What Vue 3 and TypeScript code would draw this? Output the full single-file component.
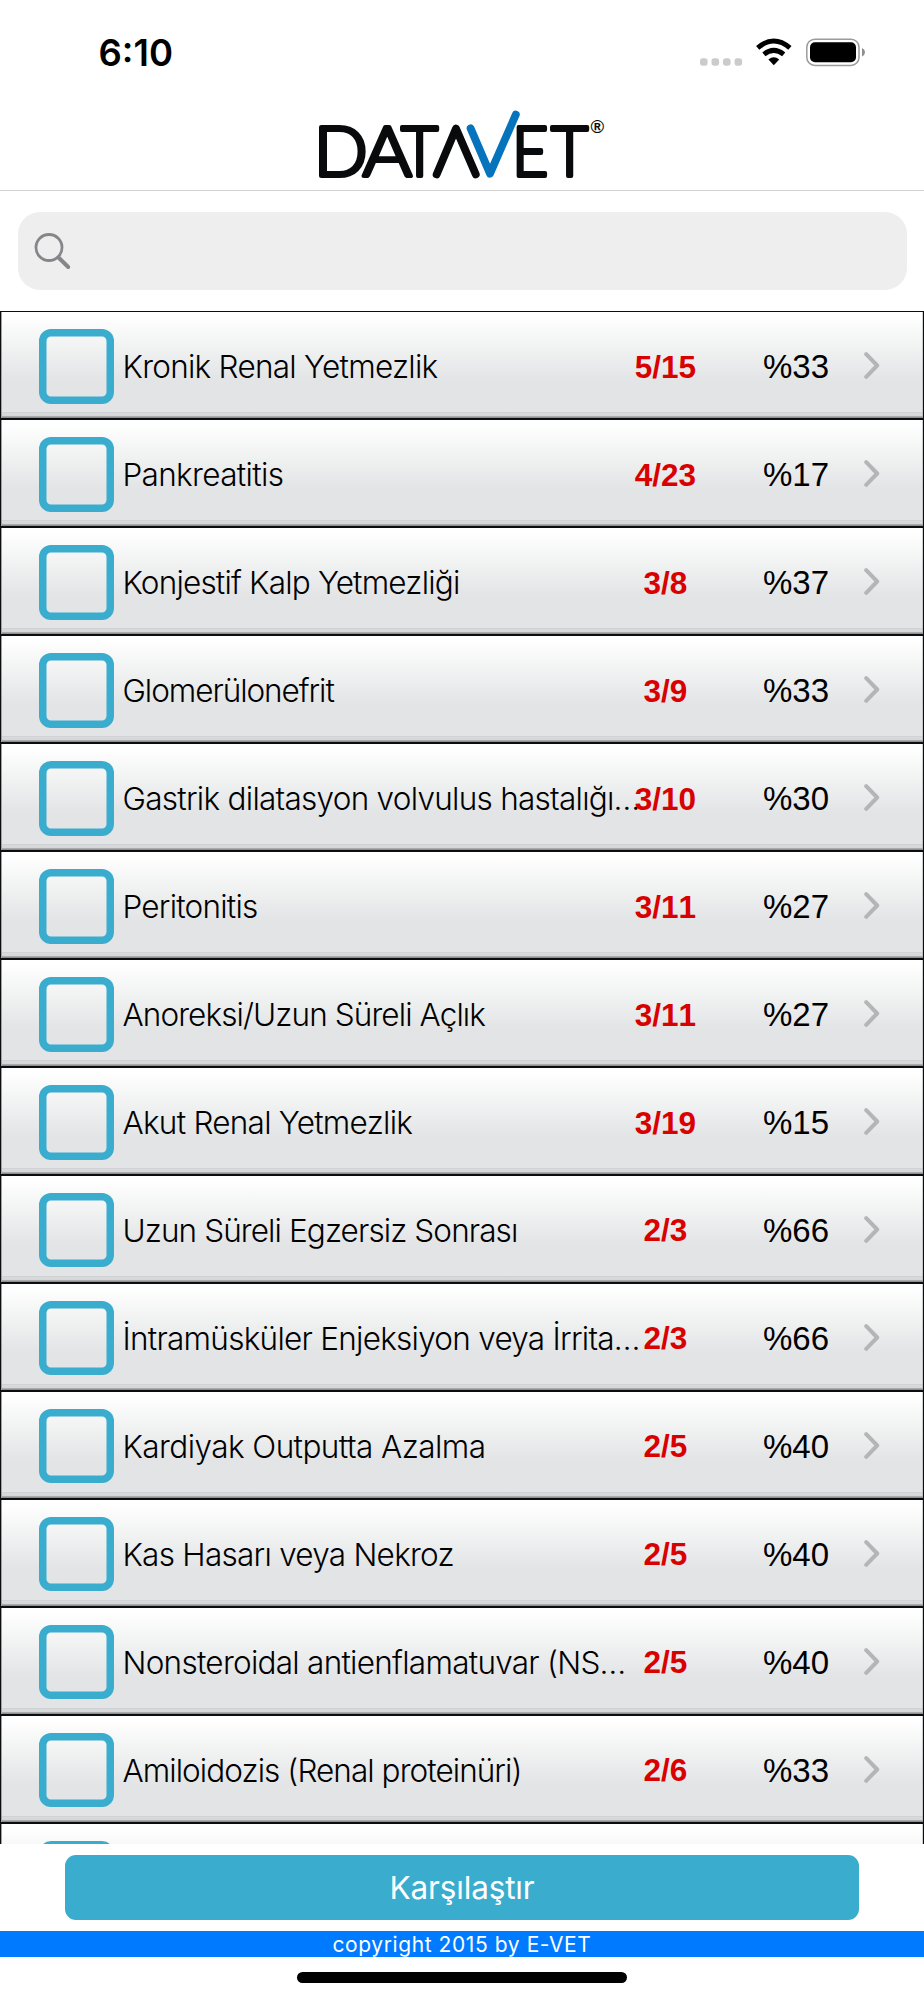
<script setup lang="ts">
interface Finding {
  name: string
  score: string
  percent: string
  spacing: number
}

const findings: Finding[] = [
  { name: 'Kronik Renal Yetmezlik', score: '5/15', percent: '%33', spacing: -0.73 },
  { name: 'Pankreatitis', score: '4/23', percent: '%17', spacing: -0.66 },
  { name: 'Konjestif Kalp Yetmezliği', score: '3/8', percent: '%37', spacing: -0.81 },
  { name: 'Glomerülonefrit', score: '3/9', percent: '%33', spacing: -1.06 },
  { name: 'Gastrik dilatasyon volvulus hastalığı…', score: '3/10', percent: '%30', spacing: -0.73 },
  { name: 'Peritonitis', score: '3/11', percent: '%27', spacing: -0.78 },
  { name: 'Anoreksi/Uzun Süreli Açlık', score: '3/11', percent: '%27', spacing: -0.9 },
  { name: 'Akut Renal Yetmezlik', score: '3/19', percent: '%15', spacing: -0.74 },
  { name: 'Uzun Süreli Egzersiz Sonrası', score: '2/3', percent: '%66', spacing: -0.9 },
  { name: 'İntramüsküler Enjeksiyon veya İrrita…', score: '2/3', percent: '%66', spacing: -0.74 },
  { name: 'Kardiyak Outputta Azalma', score: '2/5', percent: '%40', spacing: -0.56 },
  { name: 'Kas Hasarı veya Nekroz', score: '2/5', percent: '%40', spacing: -0.74 },
  { name: 'Nonsteroidal antienflamatuvar (NS…', score: '2/5', percent: '%40', spacing: -0.73 },
  { name: 'Amiloidozis (Renal proteinüri)', score: '2/6', percent: '%33', spacing: -0.94 },
  { name: '', score: '', percent: '', spacing: 0 },
]
</script>

<template>
  <div class="screen">
    <div class="status">
      <span class="time">6:10</span>
      <svg class="indicators" width="170" height="30" viewBox="0 0 170 30">
        <g fill="#cbcbcb">
          <rect x="2" y="20.2" width="7.6" height="7.6" rx="2.8" />
          <rect x="13.5" y="20.2" width="7.6" height="7.6" rx="2.8" />
          <rect x="25" y="20.2" width="7.6" height="7.6" rx="2.8" />
          <rect x="36.5" y="20.2" width="7.6" height="7.6" rx="2.8" />
        </g>
        <g fill="none" stroke="#000" stroke-width="5">
          <path d="M59.7 9.8 Q75.8 -3.8 91.9 9.8" />
          <path d="M65.9 16.4 Q75.8 8.4 85.7 16.4" />
        </g>
        <path d="M70.4 21.4 Q75.8 17 81.2 21.4 L75.8 27.2 Z" />
        <rect x="108.8" y="1.2" width="52.2" height="26.2" rx="8" fill="none" stroke="#9b9b9b" stroke-width="1.5" />
        <rect x="112" y="4.2" width="46" height="20" rx="5" />
        <path d="M164 10 Q167 11.5 167 14.2 Q167 17 164 18.4 Z" fill="#8e8e8e" />
      </svg>
    </div>

    <header class="brand">
      <svg width="300" height="80" viewBox="310 110 300 80">
        <g class="logo-text">
          <text x="313.8" y="176.4" textLength="54" lengthAdjust="spacingAndGlyphs">D</text>
          <text x="362.8" y="176.4" textLength="49" lengthAdjust="spacingAndGlyphs">A</text>
          <text x="401" y="176.4" textLength="37.2" lengthAdjust="spacingAndGlyphs">T</text>
          <text x="512" y="176.4" textLength="36.4" lengthAdjust="spacingAndGlyphs">E</text>
          <text x="551" y="176.4" textLength="37.2" lengthAdjust="spacingAndGlyphs">T</text>
        </g>
        <text class="registered" x="590.5" y="133.3">®</text>
        <g fill="none" stroke-width="7.8" stroke-linecap="round" stroke-linejoin="round">
          <path d="M436.6 174.4 L456 128.6 L475.8 174.4" stroke="#080a0b" />
          <path d="M470.6 128.4 L490 173.6 L515.8 114.6" stroke="#0674bd" />
        </g>
      </svg>
    </header>

    <div class="search">
      <svg width="36" height="37" viewBox="0 0 36 37" fill="none" stroke="#85868a">
        <circle cx="14" cy="14.5" r="13" stroke-width="2.8" />
        <path d="M23.5 24.5 L33.2 34" stroke-width="4" stroke-linecap="round" />
      </svg>
    </div>

    <main class="list">
      <div v-for="(item, index) in findings" :key="index" class="row">
        <span class="check"></span>
        <span class="name" :style="{ letterSpacing: item.spacing + 'px' }">{{ item.name }}</span>
        <span class="score">{{ item.score }}</span>
        <span class="percent">{{ item.percent }}</span>
        <svg class="chevron" width="16" height="27" viewBox="0 0 16 27">
          <path d="M2.2 2.2 L13.2 13.5 L2.2 24.8" fill="none" stroke="#b4b5b7" stroke-width="4" stroke-linecap="round" stroke-linejoin="round" />
        </svg>
      </div>
    </main>

    <button class="compare">Karşılaştır</button>
    <footer class="copyright">copyright 2015 by E-VET</footer>
    <div class="home"></div>
  </div>
</template>

<style>
body {
  background: #fff;
}
</style>

<style scoped>
.screen {
  box-sizing: border-box;
  width: 924px;
  height: 2000px;
  overflow: hidden;
  display: flex;
  flex-direction: column;
  background: #fff;
  font-family: Inter, 'Liberation Sans', sans-serif;
}
.status {
  flex: none;
  height: 110px;
  display: flex;
  justify-content: space-between;
  box-sizing: border-box;
  padding: 30px 56px 0 98.5px;
}
.time {
  font-size: 36.5px;
  line-height: 46px;
  font-weight: 600;
}
.indicators {
  margin-top: 8px;
}
.brand {
  flex: none;
  height: 80px;
  padding-left: 310px;
  border-bottom: 1px solid #d2d2d2;
}
.brand svg,
.search svg {
  display: block;
  overflow: visible;
}
.logo-text {
  font-family: Lato, sans-serif;
  font-weight: 300;
  font-size: 69px;
  fill: #080a0b;
  stroke: #080a0b;
  stroke-width: 4.2px;
  stroke-linejoin: round;
}
.registered {
  font: 700 18.5px 'Liberation Sans', sans-serif;
  fill: #080a0b;
}
.search {
  flex: none;
  box-sizing: border-box;
  height: 77.5px;
  margin: 21px 17.5px 0;
  padding: 20.5px 17px;
  border-radius: 22px;
  background: #eee;
}
.list {
  flex: none;
  height: 1533px;
  margin-top: 21.5px;
  overflow: hidden;
}
.row {
  box-sizing: border-box;
  height: 107.98px;
  display: flex;
  align-items: center;
  border: 1px solid #0c0d0e;
  box-shadow: inset 1px 0 #a2a3a4, inset -0.5px 0 #a2a3a4;
  padding: 3px 43px 0 38.3px;
  background: linear-gradient(#fff 0%, #fff 4%, #f0f1f1 35%, #e3e4e6 65%, #e3e4e6 94%, #cfd0d2 94.5%, #d9dadc 96%, #d5d6d8 98%, #8d8e90 99%);
}
.check {
  flex: none;
  width: 74.5px;
  height: 74.5px;
  box-shadow: inset 0 0 0 7.5px #3aaccd;
  border-radius: 12px;
}
.name {
  flex: none;
  width: 500px;
  margin-left: 8.7px;
  font-size: 31.5px;
  font-weight: 300;
  white-space: nowrap;
}
.score {
  flex: none;
  width: 90px;
  margin-left: -2px;
  padding-top: 1.5px;
  text-align: center;
  font: 700 31.5px 'Liberation Sans', sans-serif;
  font-kerning: none;
  color: #d90000;
}
.percent {
  flex: none;
  margin-left: auto;
  padding-top: 1.5px;
  font: 400 33px 'Liberation Sans', sans-serif;
  font-kerning: none;
}
.chevron {
  flex: none;
  margin-left: 35px;
  margin-top: -1px;
}
.compare {
  flex: none;
  height: 65px;
  margin: 11px 65px 0;
  padding: 0;
  border: 0;
  border-radius: 11px;
  background: #3aaccd;
  color: #fff;
  font: 400 31.5px Inter, sans-serif;
  letter-spacing: -0.15px;
}
.copyright {
  flex: none;
  height: 26px;
  margin-top: 10.5px;
  background: #007aff;
  color: #fff;
  text-align: center;
  font-size: 21px;
  line-height: 27px;
  letter-spacing: 0.58px;
}
.home {
  flex: none;
  width: 330px;
  height: 11px;
  margin: 15px 0 0 297px;
  border-radius: 6px;
  background: #000;
}
</style>
